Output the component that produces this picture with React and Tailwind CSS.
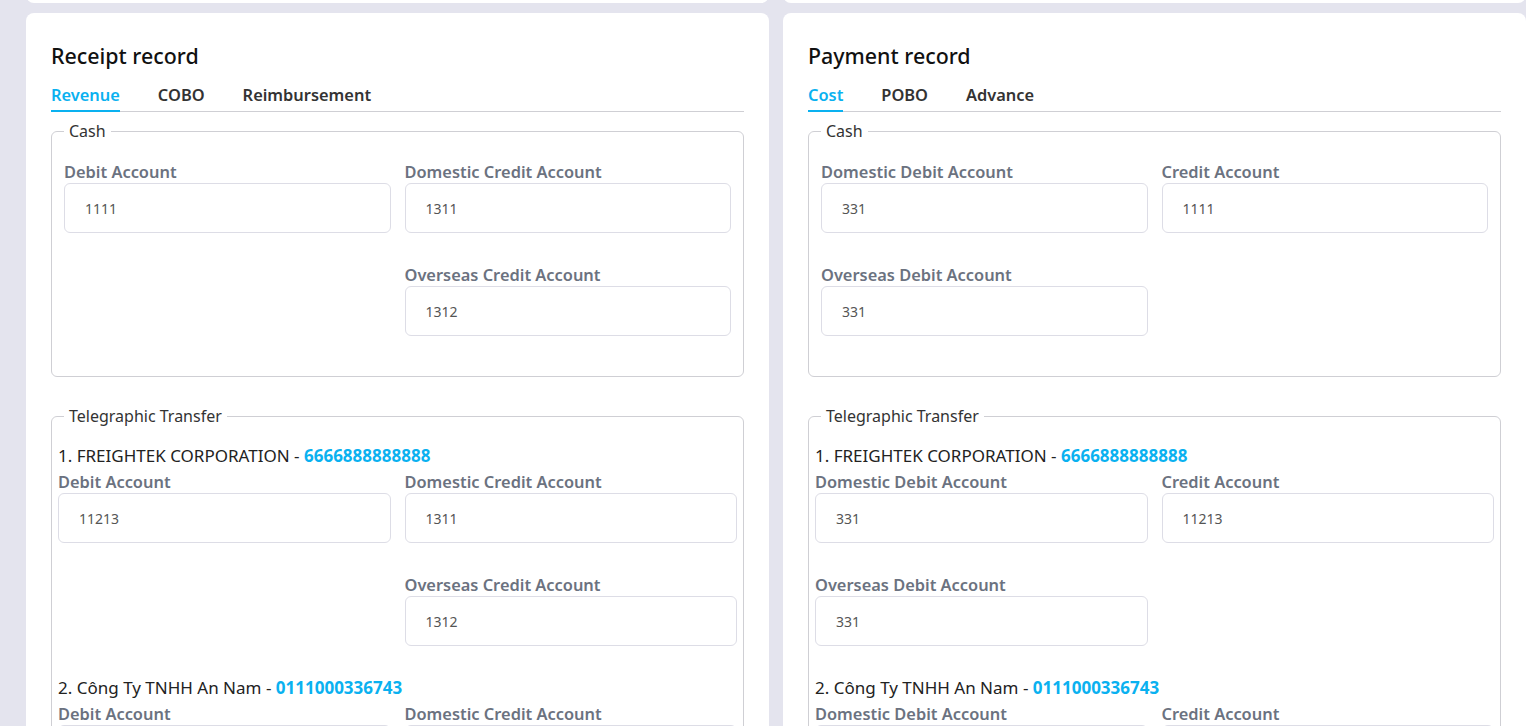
import React from 'react'

const SKY = 'text-[#0ab1f0]'

const receiptCash = [
  [{ label: 'Debit Account', value: '1111' }, { label: 'Domestic Credit Account', value: '1311' }],
  [null, { label: 'Overseas Credit Account', value: '1312' }],
]
const paymentCash = [
  [{ label: 'Domestic Debit Account', value: '331' }, { label: 'Credit Account', value: '1111' }],
  [{ label: 'Overseas Debit Account', value: '331' }, null],
]
const receiptTT = [
  [{ label: 'Debit Account', value: '11213' }, { label: 'Domestic Credit Account', value: '1311' }],
  [null, { label: 'Overseas Credit Account', value: '1312' }],
]
const paymentTT = [
  [{ label: 'Domestic Debit Account', value: '331' }, { label: 'Credit Account', value: '11213' }],
  [{ label: 'Overseas Debit Account', value: '331' }, null],
]

const companies = [
  { name: 'FREIGHTEK CORPORATION', no: '6666888888888' },
  { name: 'Công Ty TNHH An Nam', no: '0111000336743' },
]

function Field({ f }) {
  if (!f) return <div />
  return (
    <div>
      <label className="block text-[16.4px] leading-[23px] font-semibold text-[#6b7280]">{f.label}</label>
      <input
        readOnly
        value={f.value}
        className="w-full h-[50px] rounded-md border border-[#dddde6] bg-white px-5 text-[14px] text-[#555] outline-none"
      />
    </div>
  )
}

function Rows({ rows }) {
  return (
    <div className="flex flex-col gap-[30px]">
      {rows.map((r, i) => (
        <div key={i} className="grid grid-cols-2 gap-[14px]">
          <Field f={r[0]} />
          <Field f={r[1]} />
        </div>
      ))}
    </div>
  )
}

function Box({ title, className, legendClass, children }) {
  return (
    <fieldset className={`border border-[#cfcfd4] rounded-md ${className}`}>
      <legend className={`px-[5px] text-[16px] leading-[22px] text-[#333] ${legendClass}`}>{title}</legend>
      {children}
    </fieldset>
  )
}

function RecordCard({ title, tabs, cash, tt }) {
  return (
    <div className="bg-white rounded-lg px-[25px] pt-[28px] pb-8">
      <h2 className="text-[21.4px] leading-[30px] font-medium text-[#111]">{title}</h2>
      <div className="mt-[12px] flex gap-[38px] border-b border-[#cfcfd4]">
        {tabs.map((t, i) => (
          <div
            key={t}
            className={`pb-[3px] text-[16.4px] leading-[24px] font-semibold -mb-px ${
              i === 0 ? 'text-[#0ab1f0] border-b-2 border-[#0ab1f0]' : 'text-[#333] border-b-2 border-transparent'
            }`}
          >
            {t}
          </div>
        ))}
      </div>

      <Box title="Cash" className="mt-[8px] px-[12px] pt-[18px] pb-[40px]" legendClass="">
        <Rows rows={cash} />
      </Box>

      <Box title="Telegraphic Transfer" className="mt-[28px] px-[6px] pt-[17px] pb-6" legendClass="ml-[6px]">
        <div className="flex flex-col gap-[30px]">
          {companies.map((c, i) => (
            <div key={c.no}>
              <p className="text-[17px] leading-[24px] mb-[2px] text-[#222]">
                {i + 1}. {c.name} - <span className={`font-bold ${SKY}`}>{c.no}</span>
              </p>
              <Rows rows={tt} />
            </div>
          ))}
        </div>
      </Box>
    </div>
  )
}

export default function App() {
  return (
    <div className="h-screen bg-[#e4e4ee] pl-[26px] overflow-hidden" style={{ fontFamily: '"Noto Sans", sans-serif' }}>
      <div className="grid grid-cols-2 gap-[14px] -mt-[20px]">
        <div className="h-[23px] bg-white rounded-lg" />
        <div className="h-[23px] bg-white rounded-lg" />
      </div>
      <div className="grid grid-cols-2 gap-[14px] mt-[10px]">
        <RecordCard title="Receipt record" tabs={['Revenue', 'COBO', 'Reimbursement']} cash={receiptCash} tt={receiptTT} />
        <RecordCard title="Payment record" tabs={['Cost', 'POBO', 'Advance']} cash={paymentCash} tt={paymentTT} />
      </div>
    </div>
  )
}
